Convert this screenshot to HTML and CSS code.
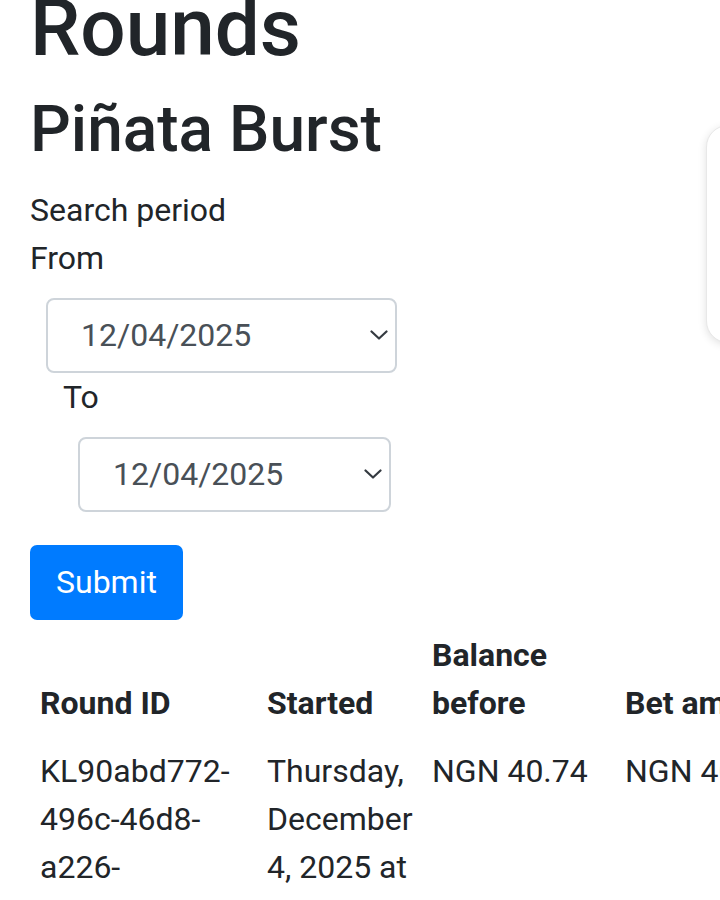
FILE: index.html
```html
<!doctype html>
<html lang="en">
<head>
  <meta charset="utf-8" />
  <meta name="viewport" content="width=device-width,initial-scale=1" />
  <title>Rounds - Piñata Burst</title>
  <link rel="stylesheet" href="styles.css">
</head>
<body>

<div class="page">
  <div class="main">
    <h1>Rounds</h1>
    <h2>Piñata Burst</h2>

    <form class="search-form">
      <div class="form-group">
        <div class="legend">Search period</div>
        <label for="fromDate">From</label>
        <div class="select-wrap from-wrap">
          <select id="fromDate" class="date-select">
            <option>12/04/2025</option>
          </select>
          <svg class="chevron" width="18" height="10" viewBox="0 0 18 10"><path d="M1.5 1.5 L9 8.5 L16.5 1.5" fill="none" stroke="#343a40" stroke-width="2.2" stroke-linecap="round" stroke-linejoin="round"/></svg>
        </div>
        <label for="toDate" class="to-label">To</label>
        <div class="select-wrap to-wrap">
          <select id="toDate" class="date-select">
            <option>12/04/2025</option>
          </select>
          <svg class="chevron" width="18" height="10" viewBox="0 0 18 10"><path d="M1.5 1.5 L9 8.5 L16.5 1.5" fill="none" stroke="#343a40" stroke-width="2.2" stroke-linecap="round" stroke-linejoin="round"/></svg>
        </div>
      </div>
      <button type="button" class="btn-submit">Submit</button>
    </form>

    <table class="rounds-table">
      <colgroup>
        <col class="c-id"><col class="c-start"><col class="c-bal"><col class="c-bet"><col class="c-win"><col class="c-after">
      </colgroup>
      <thead>
        <tr>
          <th>Round ID</th>
          <th>Started</th>
          <th>Balance before</th>
          <th>Bet amount</th>
          <th>Win amount</th>
          <th>Balance after</th>
        </tr>
      </thead>
      <tbody>
        <tr>
          <td>KL90abd772-496c-46d8-a226-5e1f0c3b8d47</td>
          <td>Thursday, December 4, 2025 at 10:15:32 AM</td>
          <td>NGN 40.74</td>
          <td>NGN 40.00</td>
          <td>NGN 0.00</td>
          <td>NGN 0.74</td>
        </tr>
      </tbody>
    </table>
  </div>

  <aside class="side">
    <div class="side-card"></div>
  </aside>
</div>

</body>
</html>
```

FILE: styles.css
```css
html{overflow-x:hidden;}
body{margin:0;font-family:Roboto, "Noto Sans", "Liberation Sans", sans-serif;font-size:32px;line-height:48px;color:#212529;background:#fff;}
.page{display:flex;align-items:flex-start;padding-left:30px;width:1200px;}
.main{flex:0 0 676px;min-width:0;}
.side{flex:0 0 320px;padding-top:125px;}
.side-card{height:216px;background:#fff;border:1px solid #e8e8e8;border-radius:22px;box-shadow:0 2px 8px rgba(0,0,0,.12);}

h1,h2{font-weight:500;line-height:1.2;margin:0 0 16px 0;}
h1{font-size:80px;margin-top:-20px;}
h2{font-size:64px;margin-bottom:17px;}

.search-form{margin:0;}
.form-group{margin-bottom:33px;}
.legend{display:block;}
label{display:inline-block;margin-bottom:16px;}
.to-label{margin-left:33px;}

.select-wrap{position:relative;}
.from-wrap{margin-left:16px;width:351px;}
.to-wrap{margin-left:48px;width:313px;}
.date-select{appearance:none;-webkit-appearance:none;display:block;width:100%;height:75px;padding:0 40px 0 33px;margin:0;border:2px solid #ced4da;border-radius:8px;background:#fff;color:#495057;font-family:inherit;font-size:32px;}
.chevron{position:absolute;right:9px;top:32px;}

.btn-submit{display:block;height:75px;padding:0 26px;margin-bottom:1px;border:0;border-radius:7px;background:#007bff;color:#fff;font-family:inherit;font-size:32px;cursor:pointer;}

.rounds-table{border-collapse:collapse;table-layout:fixed;width:1200px;margin:0;}
.c-id{width:227px;}
.c-start{width:165px;}
.c-bal{width:193px;}
.c-bet{width:205px;}
.c-win{width:205px;}
.c-after{width:205px;}
.rounds-table th,.rounds-table td{padding:10px;text-align:left;}
.rounds-table th{font-weight:700;vertical-align:bottom;}
.rounds-table td{vertical-align:top;}
```
